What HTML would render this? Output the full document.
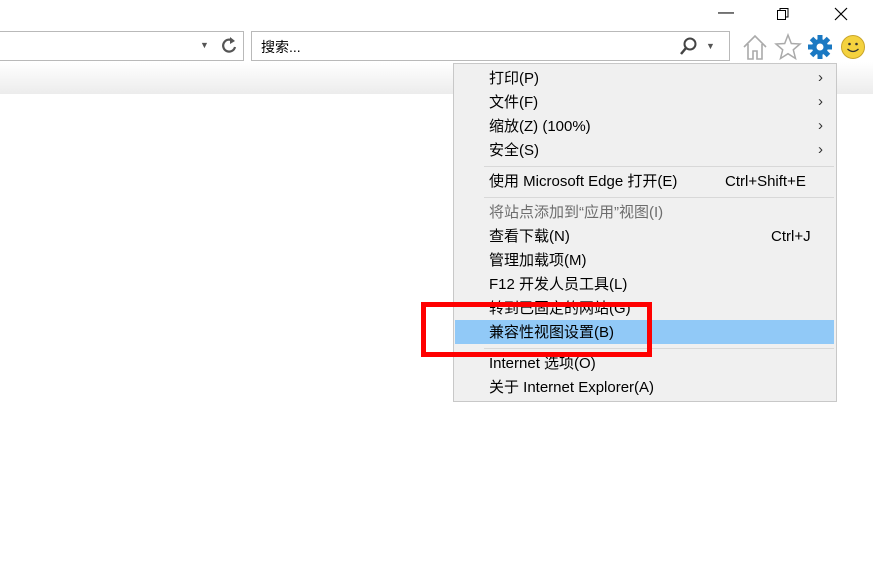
<!DOCTYPE html>
<html><head><meta charset="utf-8"><style>
body{margin:0;width:873px;height:573px;background:#fff;position:relative;overflow:hidden;font-family:"Liberation Sans","Noto Sans CJK SC",sans-serif}
.abs{position:absolute}
.band{left:0;top:62px;width:873px;height:32px;background:linear-gradient(#fff,#ececec)}
.box{border:1px solid #b9b9b9;background:#fff;height:28px;top:31px}
.menu{left:453px;top:63px;width:382px;height:337px;background:#f0f0f0;border:1px solid #c8c8c8;font-size:15px;color:#000}
.it{position:absolute;left:35px;height:24px;line-height:24px;white-space:nowrap}
.ar{position:absolute;left:364px;font-size:15px;color:#333;line-height:16px}
.sc{position:absolute;white-space:nowrap;height:24px;line-height:24px}
.sep{position:absolute;left:30px;width:350px;height:1px;background:#d8d8d8}
</style></head><body>
<div class="abs band"></div>
<div class="abs box" style="left:-2px;width:244px"></div>
<div class="abs" style="left:200px;top:40px;font-size:9px;color:#555">▼</div>
<svg class="abs" style="left:219px;top:35px" width="20" height="22" viewBox="0 0 20 22"><path d="M14 6 A6 6 0 1 0 16 12" fill="none" stroke="#555" stroke-width="2.2"/><path d="M11 2 L16 6 L11 9Z" fill="#555"/></svg>
<div class="abs box" style="left:251px;width:477px"></div>
<div class="abs" style="left:261px;top:37px;font-size:14px">搜索...</div>
<svg class="abs" style="left:679px;top:36px" width="20" height="20"><circle cx="11" cy="8" r="5.5" fill="none" stroke="#444" stroke-width="2"/><path d="M7 12 L2 18" stroke="#444" stroke-width="2.5"/></svg>
<div class="abs" style="left:706px;top:41px;font-size:9px;color:#555">▼</div>
<svg class="abs" style="left:741px;top:33px" width="28" height="28"><path d="M3 14 L14 3 L25 14 M7 11 V26 H12 V18 H16 V26 H21 V11" fill="none" stroke="#aaa" stroke-width="1.6"/></svg>
<svg class="abs" style="left:774px;top:33px" width="28" height="28"><path d="M14 2 L17.3 10.5 L26 11 L19.3 16.8 L21.5 25.5 L14 20.7 L6.5 25.5 L8.7 16.8 L2 11 L10.7 10.5Z" fill="none" stroke="#aaa" stroke-width="1.5"/></svg>
<svg class="abs" style="left:807px;top:34px" width="26" height="26" viewBox="0 0 26 26"><g fill="#1a78c2"><circle cx="13" cy="13" r="8"/><rect x="10.5" y="1" width="5" height="24"/><rect x="1" y="10.5" width="24" height="5"/><rect x="10.5" y="1" width="5" height="24" transform="rotate(45 13 13)"/><rect x="10.5" y="1" width="5" height="24" transform="rotate(-45 13 13)"/></g><circle cx="13" cy="13" r="3.5" fill="#fff"/></svg>
<svg class="abs" style="left:840px;top:34px" width="26" height="26"><circle cx="13" cy="13" r="11.5" fill="#f4d23f" stroke="#c9a52a"/><circle cx="9.5" cy="10" r="1.3" fill="#333"/><circle cx="16.5" cy="10" r="1.3" fill="#333"/><path d="M7.5 15 Q13 20 18.5 15" fill="none" stroke="#333" stroke-width="1.3"/></svg>
<div class="abs" style="left:718px;top:4px;font-size:16px;color:#000">—</div>
<svg class="abs" style="left:776px;top:7px" width="14" height="14"><rect x="1.5" y="3.5" width="8" height="9" fill="none" stroke="#000"/><path d="M4 3.5 V1.5 H12 V10 H9.5" fill="none" stroke="#000"/></svg>
<svg class="abs" style="left:834px;top:7px" width="14" height="14"><path d="M1 1 L13 13 M13 1 L1 13" stroke="#000" stroke-width="1.2"/></svg>

<div class="abs menu">
<div class="it" style="top:3px">打印(P)</div><div class="ar" style="top:6px">›</div>
<div class="it" style="top:27px">文件(F)</div><div class="ar" style="top:30px">›</div>
<div class="it" style="top:51px">缩放(Z) (100%)</div><div class="ar" style="top:54px">›</div>
<div class="it" style="top:75px">安全(S)</div><div class="ar" style="top:78px">›</div>
<div class="sep" style="top:102px"></div>
<div class="it" style="top:106px">使用 Microsoft Edge 打开(E)</div><div class="sc" style="left:271px;top:106px">Ctrl+Shift+E</div>
<div class="sep" style="top:133px"></div>
<div class="it" style="top:137px;color:#6d6d6d">将站点添加到“应用”视图(I)</div>
<div class="it" style="top:161px">查看下载(N)</div><div class="sc" style="left:317px;top:161px">Ctrl+J</div>
<div class="it" style="top:185px">管理加载项(M)</div>
<div class="it" style="top:209px">F12 开发人员工具(L)</div>
<div class="it" style="top:233px">转到已固定的网站(G)</div>
<div style="position:absolute;left:1px;top:256px;width:379px;height:24px;background:#91c9f7"></div>
<div class="it" style="top:257px">兼容性视图设置(B)</div>
<div class="sep" style="top:284px"></div>
<div class="it" style="top:288px">Internet 选项(O)</div>
<div class="it" style="top:312px">关于 Internet Explorer(A)</div>
</div>
<div class="abs" style="left:421px;top:302px;width:221px;height:45px;border:5px solid #f00"></div>
</body></html>
